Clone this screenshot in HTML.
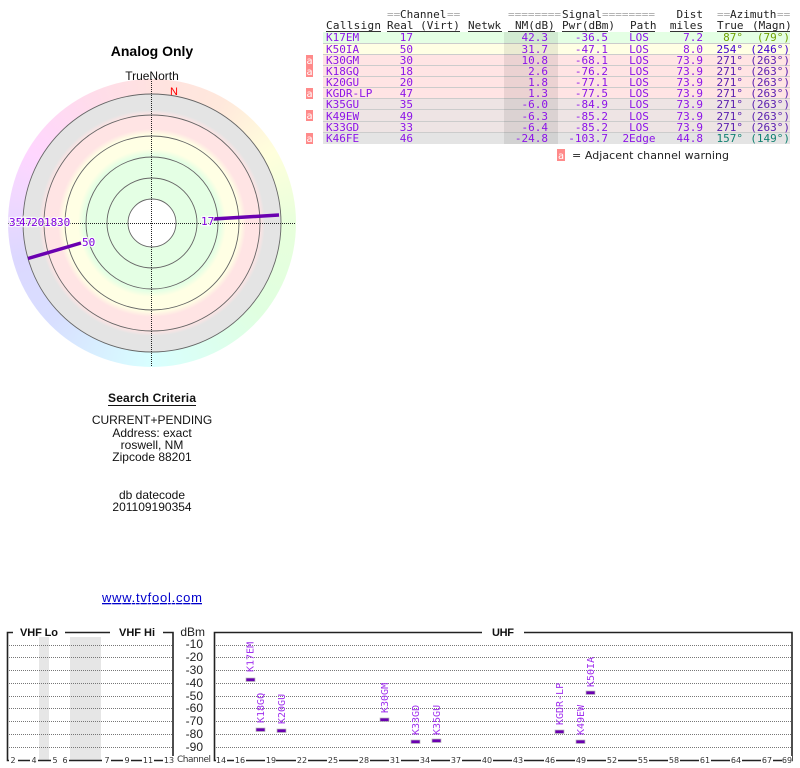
<!DOCTYPE html>
<html><head><meta charset="utf-8"><style>
html,body{margin:0;padding:0;background:#fff;width:800px;height:768px;overflow:hidden}
#hue{position:absolute;left:8px;top:79px;width:288px;height:288px;border-radius:50%;background:conic-gradient(#ffe2e0 0deg,#ffe8dc 30deg,#ffffdc 60deg,#e8ffdc 90deg,#e0ffe0 130deg,#d8ffff 180deg,#d8dfff 225deg,#dcd8ff 255deg,#f0d8ff 280deg,#ffd6ff 300deg,#ffdcea 335deg,#ffe2e0 360deg)}
#rings{position:absolute;left:23px;top:94px;width:258px;height:258px;border-radius:50%;background:radial-gradient(circle at center,#fff 0,#fff 24px,#e4ffe4 24.5px,#e4ffe4 68px,#ffffe4 74px,#ffffe4 88px,#ffe4e4 94px,#ffe4e4 108px,#e4e4e4 113px,#e4e4e4 129px)}
svg{position:absolute;left:0;top:0;filter:blur(.3px)}
text{white-space:pre}
.m{font-family:"DejaVu Sans Mono","Liberation Mono",monospace;font-size:11px}
.p{fill:#8c14e8}
.h{fill:#222}
.g{fill:#aaa}
.s{font-family:"Liberation Sans",sans-serif;font-size:12px;fill:#111;text-anchor:middle}
.e{text-anchor:end}
.c{text-anchor:middle}
.t{font-family:"DejaVu Sans",sans-serif;font-size:8px;fill:#333;text-anchor:middle}
.rl{font-family:"DejaVu Sans Mono",monospace;font-size:10px;fill:#a030ee}
.pl{font-family:"DejaVu Sans Mono",monospace;font-size:11px;fill:#8000e0;stroke:#fff;stroke-width:2.5px;stroke-opacity:.75;paint-order:stroke}
.d{stroke:#777;stroke-width:1;stroke-dasharray:1 1}
.b{fill:#6a00b0;stroke:#bbb;stroke-width:.7}
.f{stroke:#222;stroke-width:1.6;fill:none}
.ba{font-family:"DejaVu Sans Mono",monospace;font-size:10px;fill:#fff;text-anchor:middle}
</style></head><body>
<div id="hue"></div><div id="rings"></div>
<svg width="800" height="768" viewBox="0 0 800 768" xmlns="http://www.w3.org/2000/svg">
<g fill="none" stroke="#666" stroke-width=".9">
<circle cx="152" cy="223" r="24"/><circle cx="152" cy="223" r="45"/><circle cx="152" cy="223" r="66"/><circle cx="152" cy="223" r="87"/><circle cx="152" cy="223" r="108"/><circle cx="152" cy="223" r="129"/>
</g>
<line x1="8" y1="223.5" x2="296" y2="223.5" stroke="#222" stroke-dasharray="1 1"/>
<line x1="151.5" y1="79" x2="151.5" y2="367" stroke="#222" stroke-dasharray="1 1"/>
<line x1="213" y1="219" x2="279" y2="215" stroke="#6a00b0" stroke-width="3.5"/>
<line x1="28" y1="258.5" x2="81" y2="243" stroke="#6a00b0" stroke-width="3.5"/>
<text class="pl" x="9" y="226">35</text><text class="pl" x="19" y="226">47</text><text class="pl" x="31" y="226">20</text><text class="pl" x="44" y="226">18</text><text class="pl" x="57" y="226">30</text>
<text class="pl" x="201" y="225">17</text><text class="pl" x="82" y="246">50</text>
<text x="152" y="56" font-family="Liberation Sans" font-size="14" font-weight="700" fill="#000" text-anchor="middle">Analog Only</text>
<text class="s" x="152" y="80">TrueNorth</text>
<text x="174" y="95" font-family="Liberation Sans" font-size="11" fill="#f00" text-anchor="middle">N</text>
<text class="s" x="152" y="402" font-weight="700" textLength="88">Search Criteria</text>
<line x1="108" y1="405.5" x2="196" y2="405.5" stroke="#111"/>
<text class="s" x="152" y="424">CURRENT+PENDING</text>
<text class="s" x="152" y="437">Address: exact</text>
<text class="s" x="152" y="449">roswell, NM</text>
<text class="s" x="152" y="461">Zipcode 88201</text>
<text class="s" x="152" y="499">db datecode</text>
<text class="s" x="152" y="511">201109190354</text>
<text x="152" y="602" font-family="Liberation Sans" font-size="13" fill="#00c" text-anchor="middle" textLength="100" text-decoration="underline">www.tvfool.com</text>

<!-- table rows -->
<rect x="323" y="32" width="467" height="11" fill="#e4ffe4"/><rect x="323" y="44" width="467" height="10" fill="#ffffe4"/>
<rect x="323" y="55" width="467" height="10" fill="#ffe4e4"/><rect x="323" y="66" width="467" height="10" fill="#ffe4e4"/>
<rect x="323" y="77" width="467" height="10" fill="#ffe4e4"/><rect x="323" y="88" width="467" height="10" fill="#ffe4e4"/>
<rect x="323" y="99" width="467" height="10" fill="#eee4e4"/><rect x="323" y="110" width="467" height="11" fill="#eee4e4"/>
<rect x="323" y="122" width="467" height="10" fill="#eee4e4"/><rect x="323" y="133" width="467" height="11" fill="#e4e4e4"/>
<g fill="#ccc"><rect x="323" y="43" width="467" height="1"/><rect x="323" y="54" width="467" height="1"/><rect x="323" y="65" width="467" height="1"/><rect x="323" y="76" width="467" height="1"/><rect x="323" y="87" width="467" height="1"/><rect x="323" y="98" width="467" height="1"/><rect x="323" y="109" width="467" height="1"/><rect x="323" y="121" width="467" height="1"/><rect x="323" y="132" width="467" height="1"/></g>
<rect x="504" y="32" width="54" height="112" fill="#000" opacity=".08"/>
<g fill="#ff8a8a"><rect x="306" y="55" width="7" height="11"/><rect x="306" y="66" width="7" height="11"/><rect x="306" y="88" width="7" height="11"/><rect x="306" y="110" width="7" height="11"/><rect x="306" y="133" width="7" height="11"/><rect x="557" y="149" width="8" height="12"/></g>
<text class="ba" x="309.5" y="64">a</text><text class="ba" x="309.5" y="75">a</text><text class="ba" x="309.5" y="97">a</text><text class="ba" x="309.5" y="119">a</text><text class="ba" x="309.5" y="142">a</text><text class="ba" x="561" y="159">a</text>
<text x="572" y="159" font-family="DejaVu Sans" font-size="11" fill="#222" textLength="157">= Adjacent channel warning</text>

<!-- header -->
<text class="m g" x="387" y="18">==</text><text class="m h" x="400" y="18">Channel</text><text class="m g" x="447" y="18">==</text>
<text class="m g" x="508" y="18">========</text><text class="m h" x="562" y="18">Signal</text><text class="m g" x="602" y="18">========</text>
<text class="m h e" x="703" y="18">Dist</text>
<text class="m g" x="717" y="18">==</text><text class="m h" x="730" y="18">Azimuth</text><text class="m g" x="777" y="18">==</text>
<text class="m h" x="326" y="29" textLength="55">Callsign</text><text class="m h" x="387" y="29">Real (Virt)</text><text class="m h" x="468" y="29">Netwk</text><text class="m h" x="515" y="29">NM(dB)</text><text class="m h" x="562" y="29">Pwr(dBm)</text><text class="m h" x="630" y="29">Path</text><text class="m h e" x="703" y="29">miles</text><text class="m h" x="717" y="29">True</text><text class="m h" x="752" y="29">(Magn)</text>
<g fill="#333"><rect x="326" y="31" width="55" height="1"/><rect x="387" y="31" width="73" height="1"/><rect x="468" y="31" width="34" height="1"/><rect x="508" y="31" width="47" height="1"/><rect x="562" y="31" width="46" height="1"/><rect x="630" y="31" width="25" height="1"/><rect x="670" y="31" width="33" height="1"/><rect x="717" y="31" width="73" height="1"/></g>

<!-- rows text -->
<g class="m p">
<text x="326" y="41">K17EM</text><text x="326" y="53">K50IA</text><text x="326" y="64">K30GM</text><text x="326" y="75">K18GQ</text><text x="326" y="86">K20GU</text><text x="326" y="97">KGDR-LP</text><text x="326" y="108">K35GU</text><text x="326" y="120">K49EW</text><text x="326" y="131">K33GD</text><text x="326" y="142">K46FE</text>
<text class="e" x="413" y="41">17</text><text class="e" x="413" y="53">50</text><text class="e" x="413" y="64">30</text><text class="e" x="413" y="75">18</text><text class="e" x="413" y="86">20</text><text class="e" x="413" y="97">47</text><text class="e" x="413" y="108">35</text><text class="e" x="413" y="120">49</text><text class="e" x="413" y="131">33</text><text class="e" x="413" y="142">46</text>
<text class="e" x="548" y="41">42.3</text><text class="e" x="548" y="53">31.7</text><text class="e" x="548" y="64">10.8</text><text class="e" x="548" y="75">2.6</text><text class="e" x="548" y="86">1.8</text><text class="e" x="548" y="97">1.3</text><text class="e" x="548" y="108">-6.0</text><text class="e" x="548" y="120">-6.3</text><text class="e" x="548" y="131">-6.4</text><text class="e" x="548" y="142">-24.8</text>
<text class="e" x="608" y="41">-36.5</text><text class="e" x="608" y="53">-47.1</text><text class="e" x="608" y="64">-68.1</text><text class="e" x="608" y="75">-76.2</text><text class="e" x="608" y="86">-77.1</text><text class="e" x="608" y="97">-77.5</text><text class="e" x="608" y="108">-84.9</text><text class="e" x="608" y="120">-85.2</text><text class="e" x="608" y="131">-85.2</text><text class="e" x="608" y="142">-103.7</text>
<text class="c" x="639" y="41">LOS</text><text class="c" x="639" y="53">LOS</text><text class="c" x="639" y="64">LOS</text><text class="c" x="639" y="75">LOS</text><text class="c" x="639" y="86">LOS</text><text class="c" x="639" y="97">LOS</text><text class="c" x="639" y="108">LOS</text><text class="c" x="639" y="120">LOS</text><text class="c" x="639" y="131">LOS</text><text class="c" x="639" y="142">2Edge</text>
<text class="e" x="703" y="41">7.2</text><text class="e" x="703" y="53">8.0</text><text class="e" x="703" y="64">73.9</text><text class="e" x="703" y="75">73.9</text><text class="e" x="703" y="86">73.9</text><text class="e" x="703" y="97">73.9</text><text class="e" x="703" y="108">73.9</text><text class="e" x="703" y="120">73.9</text><text class="e" x="703" y="131">73.9</text><text class="e" x="703" y="142">44.8</text>
</g>
<g class="m">
<g fill="#70a000"><text class="e" x="743" y="41">87°</text><text class="e" x="790" y="41">(79°)</text></g>
<g fill="#4000d0"><text class="e" x="743" y="53">254°</text><text class="e" x="790" y="53">(246°)</text></g>
<g fill="#5a20b0"><text class="e" x="743" y="64">271°</text><text class="e" x="790" y="64">(263°)</text><text class="e" x="743" y="75">271°</text><text class="e" x="790" y="75">(263°)</text><text class="e" x="743" y="86">271°</text><text class="e" x="790" y="86">(263°)</text><text class="e" x="743" y="97">271°</text><text class="e" x="790" y="97">(263°)</text><text class="e" x="743" y="108">271°</text><text class="e" x="790" y="108">(263°)</text><text class="e" x="743" y="120">271°</text><text class="e" x="790" y="120">(263°)</text><text class="e" x="743" y="131">271°</text><text class="e" x="790" y="131">(263°)</text></g>
<g fill="#108070"><text class="e" x="743" y="142">157°</text><text class="e" x="790" y="142">(149°)</text></g>
</g>

<!-- chart -->
<rect x="39" y="637" width="10" height="123" fill="#e6e6e6"/><rect x="70" y="637" width="31" height="123" fill="#e6e6e6"/>
<g class="d">
<path d="M9 645.5H172M9 657.5H172M9 670.5H172M9 683.5H172M9 696.5H172M9 708.5H172M9 721.5H172M9 734.5H172M9 747.5H172"/>
<path d="M216 645.5H791M216 657.5H791M216 670.5H791M216 683.5H791M216 696.5H791M216 708.5H791M216 721.5H791M216 734.5H791M216 747.5H791"/>
</g>
<path class="f" d="M13 632.5H7.5V760.5H173V632.5H163M65 632.5H110"/>
<path class="f" d="M482 632.5H214.5V760.5H792V632.5H524"/>
<g font-family="Liberation Sans" font-size="11" font-weight="700" fill="#111"><text x="20" y="636" textLength="38">VHF Lo</text><text x="119" y="636" textLength="36">VHF Hi</text><text x="492" y="636" textLength="22">UHF</text></g>
<g font-family="Liberation Sans" font-size="12" fill="#222" text-anchor="end"><text x="205" y="636">dBm</text><text x="203" y="648">-10</text><text x="203" y="661">-20</text><text x="203" y="674">-30</text><text x="203" y="687">-40</text><text x="203" y="700">-50</text><text x="203" y="712">-60</text><text x="203" y="725">-70</text><text x="203" y="738">-80</text><text x="203" y="751">-90</text></g>
<text x="177" y="762" font-family="DejaVu Sans" font-size="9" fill="#333" textLength="34">Channel</text>
<g fill="#fff">
<rect x="9" y="756" width="9" height="8"/><rect x="30" y="756" width="8" height="8"/><rect x="51" y="756" width="18" height="8"/><rect x="102" y="756" width="9" height="8"/><rect x="123" y="756" width="8" height="8"/><rect x="142" y="756" width="12" height="8"/><rect x="163" y="756" width="11" height="8"/>
<rect x="216" y="756" width="11" height="8"/><rect x="234" y="756" width="12" height="8"/><rect x="265" y="756" width="11" height="8"/><rect x="296" y="756" width="12" height="8"/><rect x="327" y="756" width="12" height="8"/><rect x="358" y="756" width="12" height="8"/><rect x="389" y="756" width="12" height="8"/><rect x="419" y="756" width="12" height="8"/><rect x="450" y="756" width="12" height="8"/><rect x="481" y="756" width="12" height="8"/><rect x="512" y="756" width="12" height="8"/><rect x="544" y="756" width="12" height="8"/><rect x="575" y="756" width="12" height="8"/><rect x="606" y="756" width="12" height="8"/><rect x="637" y="756" width="12" height="8"/><rect x="668" y="756" width="12" height="8"/><rect x="699" y="756" width="12" height="8"/><rect x="730" y="756" width="12" height="8"/><rect x="761" y="756" width="12" height="8"/><rect x="782" y="756" width="10" height="8"/>
</g>
<g class="t">
<text x="13" y="763">2</text><text x="34" y="763">4</text><text x="55" y="763">5</text><text x="65" y="763">6</text><text x="107" y="763">7</text><text x="127" y="763">9</text><text x="148" y="763">11</text><text x="169" y="763">13</text>
<text x="221" y="763">14</text><text x="240" y="763">16</text><text x="271" y="763">19</text><text x="302" y="763">22</text><text x="333" y="763">25</text><text x="364" y="763">28</text><text x="395" y="763">31</text><text x="425" y="763">34</text><text x="456" y="763">37</text><text x="487" y="763">40</text><text x="518" y="763">43</text><text x="550" y="763">46</text><text x="581" y="763">49</text><text x="612" y="763">52</text><text x="643" y="763">55</text><text x="674" y="763">58</text><text x="705" y="763">61</text><text x="736" y="763">64</text><text x="767" y="763">67</text><text x="787" y="763">69</text>
</g>
<g>
<rect class="b" x="246" y="678" width="9" height="3.5"/><rect class="b" x="256" y="728" width="9" height="3.5"/><rect class="b" x="277" y="729" width="9" height="3.5"/><rect class="b" x="380" y="718" width="9" height="3.5"/><rect class="b" x="411" y="740" width="9" height="3.5"/><rect class="b" x="432" y="739" width="9" height="3.5"/><rect class="b" x="555" y="730" width="9" height="3.5"/><rect class="b" x="576" y="740" width="9" height="3.5"/><rect class="b" x="586" y="691" width="9" height="3.5"/>
</g>
<g class="rl">
<text transform="translate(253.5,672) rotate(-90)">K17EM</text>
<text transform="translate(264,723) rotate(-90)">K18GQ</text>
<text transform="translate(285,724) rotate(-90)">K20GU</text>
<text transform="translate(388,713) rotate(-90)">K30GM</text>
<text transform="translate(419,735) rotate(-90)">K33GD</text>
<text transform="translate(440,735) rotate(-90)">K35GU</text>
<text transform="translate(563,725) rotate(-90)">KGDR-LP</text>
<text transform="translate(584,735) rotate(-90)">K49EW</text>
<text transform="translate(594,687) rotate(-90)">K50IA</text>
</g>
</svg>
</body></html>
